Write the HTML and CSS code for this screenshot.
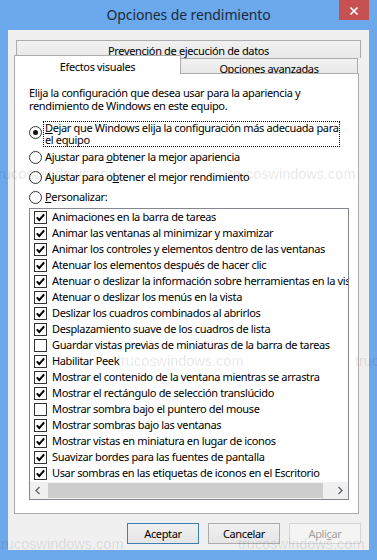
FILE: index.html
```html
<!DOCTYPE html>
<html lang="es">
<head>
<meta charset="utf-8">
<title>Opciones de rendimiento</title>
<link rel="stylesheet" href="styles.css">
</head>
<body>
<div class="window">
  <div class="titlebar">
    <span class="spacer"></span>
    <h1 class="title">Opciones de rendimiento</h1>
    <button class="close" aria-label="Cerrar"><svg width="30" height="20" viewBox="0 0 30 20"><path d="M11.5 7.5 L18.5 14.5 M18.5 7.5 L11.5 14.5" stroke="#fff" stroke-width="1.7" fill="none"/></svg></button>
  </div>
  <div class="client">
    <div class="tabs">
      <div class="tabrow-back"><div class="tab tab-back">Prevención de ejecución de datos</div></div>
      <div class="tabrow-front">
        <div class="tab tab-active">Efectos visuales</div>
        <div class="tab tab-adv">Opciones avanzadas</div>
      </div>
    </div>
    <div class="panel">
      <p class="intro">Elija la configuración que desea usar para la apariencia y<br>rendimiento de Windows en este equipo.</p>
      <div class="radios">
        <div class="radio radio-first"><span class="rb rb-on"></span><span class="rlabel rlabel-focus"><u>D</u>ejar que Windows elija la configuración más adecuada para<br>el equipo</span></div>
        <div class="radio"><span class="rb"></span><span class="rlabel">Ajustar para <u>o</u>btener la mejor apariencia</span></div>
        <div class="radio"><span class="rb"></span><span class="rlabel">Ajustar para o<u>b</u>tener el mejor rendimiento</span></div>
        <div class="radio"><span class="rb"></span><span class="rlabel"><u>P</u>ersonalizar:</span></div>
      </div>
      <div class="listbox">
        <ul class="items">
          <li class="item"><span class="cb on"><svg width="11" height="11" viewBox="0 0 11 11"><path d="M1.8 5.4 L4.3 8 L9.2 2.4" stroke="#000" stroke-width="2" fill="none"/></svg></span>Animaciones en la barra de tareas</li>
          <li class="item"><span class="cb on"><svg width="11" height="11" viewBox="0 0 11 11"><path d="M1.8 5.4 L4.3 8 L9.2 2.4" stroke="#000" stroke-width="2" fill="none"/></svg></span>Animar las ventanas al minimizar y maximizar</li>
          <li class="item"><span class="cb on"><svg width="11" height="11" viewBox="0 0 11 11"><path d="M1.8 5.4 L4.3 8 L9.2 2.4" stroke="#000" stroke-width="2" fill="none"/></svg></span>Animar los controles y elementos dentro de las ventanas</li>
          <li class="item"><span class="cb on"><svg width="11" height="11" viewBox="0 0 11 11"><path d="M1.8 5.4 L4.3 8 L9.2 2.4" stroke="#000" stroke-width="2" fill="none"/></svg></span>Atenuar los elementos después de hacer clic</li>
          <li class="item"><span class="cb on"><svg width="11" height="11" viewBox="0 0 11 11"><path d="M1.8 5.4 L4.3 8 L9.2 2.4" stroke="#000" stroke-width="2" fill="none"/></svg></span>Atenuar o deslizar la información sobre herramientas en la vista</li>
          <li class="item"><span class="cb on"><svg width="11" height="11" viewBox="0 0 11 11"><path d="M1.8 5.4 L4.3 8 L9.2 2.4" stroke="#000" stroke-width="2" fill="none"/></svg></span>Atenuar o deslizar los menús en la vista</li>
          <li class="item"><span class="cb on"><svg width="11" height="11" viewBox="0 0 11 11"><path d="M1.8 5.4 L4.3 8 L9.2 2.4" stroke="#000" stroke-width="2" fill="none"/></svg></span>Deslizar los cuadros combinados al abrirlos</li>
          <li class="item"><span class="cb on"><svg width="11" height="11" viewBox="0 0 11 11"><path d="M1.8 5.4 L4.3 8 L9.2 2.4" stroke="#000" stroke-width="2" fill="none"/></svg></span>Desplazamiento suave de los cuadros de lista</li>
          <li class="item"><span class="cb"></span>Guardar vistas previas de miniaturas de la barra de tareas</li>
          <li class="item"><span class="cb on"><svg width="11" height="11" viewBox="0 0 11 11"><path d="M1.8 5.4 L4.3 8 L9.2 2.4" stroke="#000" stroke-width="2" fill="none"/></svg></span>Habilitar Peek</li>
          <li class="item"><span class="cb on"><svg width="11" height="11" viewBox="0 0 11 11"><path d="M1.8 5.4 L4.3 8 L9.2 2.4" stroke="#000" stroke-width="2" fill="none"/></svg></span>Mostrar el contenido de la ventana mientras se arrastra</li>
          <li class="item"><span class="cb on"><svg width="11" height="11" viewBox="0 0 11 11"><path d="M1.8 5.4 L4.3 8 L9.2 2.4" stroke="#000" stroke-width="2" fill="none"/></svg></span>Mostrar el rectángulo de selección translúcido</li>
          <li class="item"><span class="cb"></span>Mostrar sombra bajo el puntero del mouse</li>
          <li class="item"><span class="cb on"><svg width="11" height="11" viewBox="0 0 11 11"><path d="M1.8 5.4 L4.3 8 L9.2 2.4" stroke="#000" stroke-width="2" fill="none"/></svg></span>Mostrar sombras bajo las ventanas</li>
          <li class="item"><span class="cb on"><svg width="11" height="11" viewBox="0 0 11 11"><path d="M1.8 5.4 L4.3 8 L9.2 2.4" stroke="#000" stroke-width="2" fill="none"/></svg></span>Mostrar vistas en miniatura en lugar de iconos</li>
          <li class="item"><span class="cb on"><svg width="11" height="11" viewBox="0 0 11 11"><path d="M1.8 5.4 L4.3 8 L9.2 2.4" stroke="#000" stroke-width="2" fill="none"/></svg></span>Suavizar bordes para las fuentes de pantalla</li>
          <li class="item"><span class="cb on"><svg width="11" height="11" viewBox="0 0 11 11"><path d="M1.8 5.4 L4.3 8 L9.2 2.4" stroke="#000" stroke-width="2" fill="none"/></svg></span>Usar sombras en las etiquetas de iconos en el Escritorio</li>
        </ul>
        <div class="hscroll">
          <span class="sarrow"><svg width="17" height="17" viewBox="0 0 17 17"><path d="M9.5 5 L6 8.5 L9.5 12" stroke="#606060" stroke-width="1.3" fill="none"/></svg></span>
          <span class="track"><span class="thumb"></span></span>
          <span class="sarrow"><svg width="17" height="17" viewBox="0 0 17 17"><path d="M7.5 5 L11 8.5 L7.5 12" stroke="#606060" stroke-width="1.3" fill="none"/></svg></span>
        </div>
      </div>
    </div>
    <div class="buttons">
      <button class="btn btn-default">Aceptar</button>
      <button class="btn">Cancelar</button>
      <button class="btn btn-disabled">Apli<u>c</u>ar</button>
    </div>
  </div>
  <span class="wm wm1">trucoswindows.com</span>
  <span class="wm wm2">trucoswindows.com</span>
  <span class="wm wm3">trucoswindows.com</span>
  <span class="wm wm4">trucoswindows.com</span>
  <span class="wm wm5">trucoswindows.com</span>
  <span class="wm wm6">trucoswindows.com</span>
</div>
</body>
</html>
```

FILE: styles.css
```css
* { box-sizing: border-box; }

html, body {
  margin: 0;
  padding: 0;
  background: #6ba8ec;
}

body {
  font-family: "Noto Sans", "Open Sans", sans-serif;
  font-size: 11px;
  letter-spacing: -0.35px;
  color: #000;
}

.window {
  position: relative;
  width: 377px;
  height: 560px;
  background: #6ba8ec;
  overflow: hidden;
  display: flex;
  flex-direction: column;
}

.titlebar {
  height: 30px;
  display: grid;
  grid-template-columns: 1fr auto 1fr;
}

.title {
  margin: 0;
  font-size: 14px;
  font-weight: normal;
  letter-spacing: -0.1px;
  line-height: 30px;
  color: #1c2a3a;
  white-space: nowrap;
}

.close {
  justify-self: end;
  align-self: start;
  margin: 0 8px 0 0;
  padding: 0;
  border: 0;
  width: 30px;
  height: 20px;
  background: #c75050;
  display: block;
}

.close svg { display: block; }

.client {
  margin: 0 8px;
  height: 520px;
  background: #f0f0f0;
  padding: 10px 10px 0 6px;
  display: flex;
  flex-direction: column;
}

/* tabs */
.tabs {
  height: 33px;
  display: flex;
  flex-direction: column;
}

.tab {
  text-align: center;
  white-space: nowrap;
  border: 1px solid #acacac;
}

.tabrow-back {
  margin-left: 2px;
  margin-right: -2px;
  height: 18px;
}

.tab-back {
  height: 18px;
  line-height: 18px;
  padding-top: 1px;
  border-bottom: 0;
  background: linear-gradient(#f2f2f2, #e8e8e8);
}

.tabrow-front {
  margin-top: -2px;
  height: 17px;
  display: flex;
  align-items: flex-end;
}

.tab-active {
  position: relative;
  z-index: 2;
  width: 167px;
  height: 19px;
  margin-bottom: -1px;
  line-height: 19px;
  padding-top: 1px;
  border-bottom: 0;
  background: #fff;
}

.tab-adv {
  width: 177px;
  height: 15px;
  line-height: 15px;
  padding-top: 2px;
  border-left: 0;
  border-bottom: 0;
  background: linear-gradient(#f2f2f2, #e8e8e8);
}

/* panel */
.panel {
  height: 441px;
  border: 1px solid #acacac;
  background: #fff;
  padding: 12px 10px 0 14px;
}

.intro {
  margin: 0;
  line-height: 13px;
  white-space: nowrap;
}

.radios {
  margin-top: 9px;
}

.radio {
  display: flex;
  align-items: center;
  height: 20px;
  line-height: 12px;
  white-space: nowrap;
}

.radio-first {
  height: 26px;
  align-items: flex-start;
}

.rb {
  flex: none;
  width: 13px;
  height: 13px;
  border: 1px solid #333;
  border-radius: 50%;
  background: #fff;
  margin-right: 1px;
  display: flex;
  align-items: center;
  justify-content: center;
}

.radio-first .rb { margin-top: 5px; }

.rb-on::after {
  content: "";
  width: 5px;
  height: 5px;
  border-radius: 50%;
  background: #111;
}

.rlabel {
  border: 1px dotted transparent;
  padding: 0 1px;
}

.rlabel-focus {
  border-color: #000;
}

/* listbox */
.listbox {
  margin-top: 1px;
  width: 320px;
  height: 292px;
  border: 1px solid #828790;
  background: #fff;
  overflow: hidden;
}

.items {
  list-style: none;
  margin: 0;
  padding: 0 0 1px 4px;
  height: 273px;
}

.item {
  height: 16px;
  line-height: 16px;
  display: flex;
  align-items: center;
  white-space: nowrap;
}

.cb {
  flex: none;
  width: 13px;
  height: 13px;
  border: 1px solid #333;
  background: #fff;
  margin-right: 5px;
  display: flex;
}

.cb svg { display: block; }

.hscroll {
  height: 17px;
  display: flex;
  background: #f0f0f0;
}

.sarrow {
  width: 17px;
  height: 17px;
  flex: none;
}

.sarrow svg { display: block; }

.track {
  flex: 1;
  display: flex;
  align-items: center;
  padding: 0 8px 0 1px;
}

.thumb {
  display: block;
  width: 100%;
  height: 15px;
  background: #cdcdcd;
}

/* buttons */
.buttons {
  margin-top: 9px;
  margin-right: -2px;
  display: flex;
  justify-content: flex-end;
  gap: 9px;
}

.btn {
  width: 72px;
  height: 21px;
  padding: 0;
  font-family: inherit;
  font-size: 11px;
  letter-spacing: -0.35px;
  color: #000;
  border: 1px solid #acacac;
  background: linear-gradient(#f0f0f0, #e5e5e5);
}

.btn-default {
  border-color: #3c7fb1;
}

.btn-disabled {
  color: #a0a0a0;
  border-color: #d5d5d5;
  background: #f4f4f4;
}

/* watermark overlay */
.wm {
  position: absolute;
  font-family: "Liberation Sans", Arial, sans-serif;
  font-size: 14.5px;
  letter-spacing: 0;
  line-height: 17px;
  color: rgba(0, 0, 0, 0.11);
  white-space: nowrap;
  pointer-events: none;
}

.wm1 { left: -6px; top: 166px; }
.wm2 { left: 229px; top: 166px; }
.wm3 { left: 117px; top: 353px; }
.wm4 { left: 355px; top: 353px; }
.wm5 { left: -3px; top: 536px; }
.wm6 { left: 238px; top: 536px; }
```
